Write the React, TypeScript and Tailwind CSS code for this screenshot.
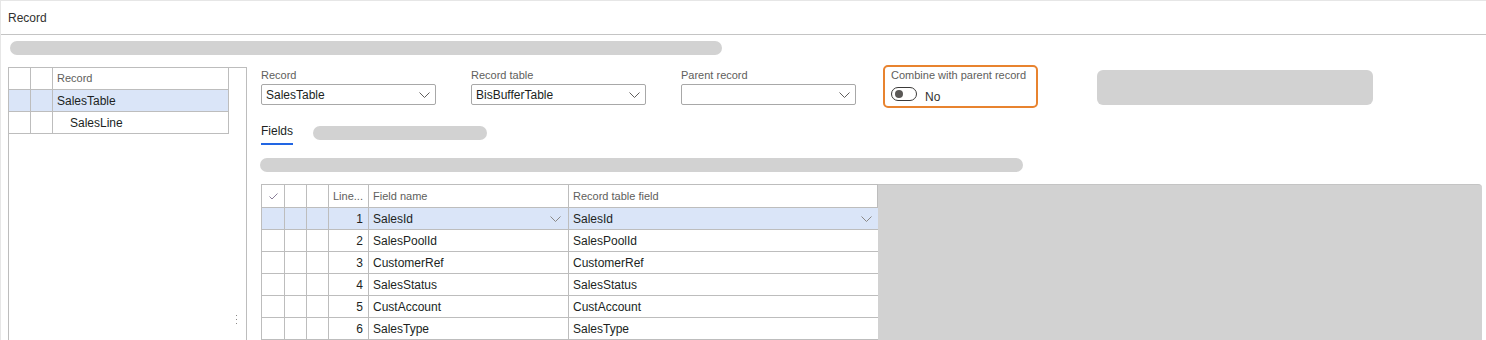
import { Fragment } from "react";

const rows = [
    { line: 1, field: "SalesId", tableField: "SalesId" },
    { line: 2, field: "SalesPoolId", tableField: "SalesPoolId" },
    { line: 3, field: "CustomerRef", tableField: "CustomerRef" },
    { line: 4, field: "SalesStatus", tableField: "SalesStatus" },
    { line: 5, field: "CustAccount", tableField: "CustAccount" },
    { line: 6, field: "SalesType", tableField: "SalesType" },
];

function Chevron({ className = "" }: { className?: string }) {
    return (
        <svg width="11" height="6" viewBox="0 0 11 6" className={className}>
            <polyline points="0.5,0.5 5.5,5.5 10.5,0.5" fill="none" stroke="currentColor" strokeWidth="1" />
        </svg>
    );
}

function Dropdown({ label, value }: { label: string, value?: string }) {
    return (
        <div className="w-[175px] flex flex-col">
            <div className="h-[17px] leading-[17px] text-[11px] text-[#605e5c]">{label}</div>
            <div className="h-[21px] border border-[#a8a8a8] rounded-[2px] flex items-center justify-between pl-[4px] pr-[5px] bg-white">
                <span className="text-[12px] text-[#201f1e]">{value}</span>
                <Chevron className="text-[#605e5c]" />
            </div>
        </div>
    );
}

function RecordTree() {
    const cell = "h-[22px] border-r border-b border-[#bdbdbd] flex items-center";
    return (
        <div className="w-[239px] h-[273px] border border-b-0 border-[#bdbdbd] flex flex-col">
            <div className="w-[220px] grid grid-cols-[22px_22px_176px]">
                <div className={cell}></div>
                <div className={cell}></div>
                <div className={`${cell} pl-[4px] text-[11px] text-[#605e5c]`}>Record</div>

                <div className={`${cell} bg-[#dae5f8]`}></div>
                <div className={`${cell} bg-[#dae5f8]`}></div>
                <div className={`${cell} bg-[#dae5f8] pl-[4px] text-[12px] text-[#201f1e]`}>SalesTable</div>

                <div className={cell}></div>
                <div className={cell}></div>
                <div className={`${cell} pl-[17px] text-[12px] text-[#201f1e]`}>SalesLine</div>
            </div>
            <div className="flex-1 flex items-end justify-end pr-[9px] pb-[16px]">
                <div className="flex flex-col gap-[3px]">
                    <div className="w-[1px] h-[1px] bg-[#8a8886]"></div>
                    <div className="w-[1px] h-[1px] bg-[#8a8886]"></div>
                    <div className="w-[1px] h-[1px] bg-[#8a8886]"></div>
                </div>
            </div>
        </div>
    );
}

function FieldsGrid() {
    const cell = "h-[22px] border-l border-b border-[#bdbdbd] flex items-center";
    const head = "h-[23px] border-l border-b border-[#bdbdbd] flex items-center";
    return (
        <div className="w-[617px] border-r border-t border-[#bdbdbd] grid grid-cols-[23px_22px_22px_40px_200px_310px] self-start">
            <div className={`${head} justify-center text-[#8a7f99]`}>
                <svg width="9" height="7" viewBox="0 0 9 7">
                    <polyline points="0.5,3.5 3,6 8.5,0.5" fill="none" stroke="currentColor" strokeWidth="1" />
                </svg>
            </div>
            <div className={head}></div>
            <div className={head}></div>
            <div className={`${head} pl-[4px] text-[11px] text-[#605e5c]`}>Line...</div>
            <div className={`${head} pl-[4px] text-[11px] text-[#605e5c]`}>Field name</div>
            <div className={`${head} pl-[4px] text-[11px] text-[#605e5c]`}>Record table field</div>

            {rows.map((row, i) => {
                const bg = i === 0 ? "bg-[#dae5f8]" : "bg-white";
                return (
                    <Fragment key={row.line}>
                        <div className={`${cell} ${bg}`}></div>
                        <div className={`${cell} ${bg}`}></div>
                        <div className={`${cell} ${bg}`}></div>
                        <div className={`${cell} ${bg} justify-end pr-[5px] text-[12px] text-[#201f1e]`}>{row.line}</div>
                        <div className={`${cell} ${bg} justify-between pl-[4px] pr-[7px] text-[12px] text-[#201f1e]`}>
                            <span>{row.field}</span>
                            {i === 0 && <Chevron className="text-[#8a8886]" />}
                        </div>
                        <div className={`${cell} ${bg} justify-between pl-[4px] pr-[6px] text-[12px] text-[#201f1e]`}>
                            <span>{row.tableField}</span>
                            {i === 0 && <Chevron className="text-[#8a8886]" />}
                        </div>
                    </Fragment>
                );
            })}
        </div>
    );
}

export default function App() {
    return (
        <div className="w-[1486px] h-[340px] overflow-hidden bg-white border-t border-l border-[#e6e6e6] flex flex-col font-['Liberation_Sans',Arial,sans-serif]">
            <div className="h-[34px] border-b border-[#c4c4c4] flex items-center pl-[7px] text-[12px] text-[#323130]">
                Record
            </div>

            <div className="mt-[6px] ml-[9px] w-[712px] h-[14px] rounded-full bg-[#d2d2d2]"></div>

            <div className="mt-[12px] ml-[7px] flex flex-1 min-h-0">
                <RecordTree />

                <div className="ml-[14px] flex-1 flex flex-col min-w-0">
                    <div className="flex items-start">
                        <Dropdown label="Record" value="SalesTable" />
                        <div className="ml-[35px]"><Dropdown label="Record table" value="BisBufferTable" /></div>
                        <div className="ml-[35px]"><Dropdown label="Parent record" /></div>

                        <div className="ml-[27px] -mt-[2px] w-[155px] h-[43px] border-2 border-[#e8832f] rounded-[5px] pl-[6px] flex flex-col">
                            <div className="h-[16px] leading-[16px] text-[11px] text-[#605e5c] whitespace-nowrap">Combine with parent record</div>
                            <div className="mt-[4px] flex items-start">
                                <div className="w-[26px] h-[14px] rounded-full border border-[#3b3a39] flex items-center pl-[3px]">
                                    <div className="w-[8px] h-[8px] rounded-full bg-[#5a5856]"></div>
                                </div>
                                <span className="ml-[8px] mt-[3px] text-[12px] leading-[14px] text-[#323130]">No</span>
                            </div>
                        </div>

                        <div className="ml-[59px] mt-[3px] w-[276px] h-[35px] rounded-[6px] bg-[#d2d2d2]"></div>
                    </div>

                    <div className="mt-[14px] flex items-start">
                        <div className="w-[32px] flex flex-col items-center">
                            <span className="leading-[18px] text-[12px] text-[#201f1e]">Fields</span>
                            <div className="mt-[3px] w-full h-[2px] bg-[#2266e3]"></div>
                        </div>
                        <div className="ml-[20px] mt-[4px] w-[174px] h-[14px] rounded-full bg-[#d2d2d2]"></div>
                    </div>

                    <div className="mt-[13px] -ml-[1px] w-[763px] h-[14px] rounded-full bg-[#d2d2d2]"></div>

                    <div className="mt-[12px] flex flex-1 min-h-0 mr-[4px]">
                        <FieldsGrid />
                        <div className="flex-1 bg-[#d2d2d2] border-t border-[#c4c4c4] rounded-tr-[4px]"></div>
                    </div>
                </div>
            </div>
        </div>
    );
}
